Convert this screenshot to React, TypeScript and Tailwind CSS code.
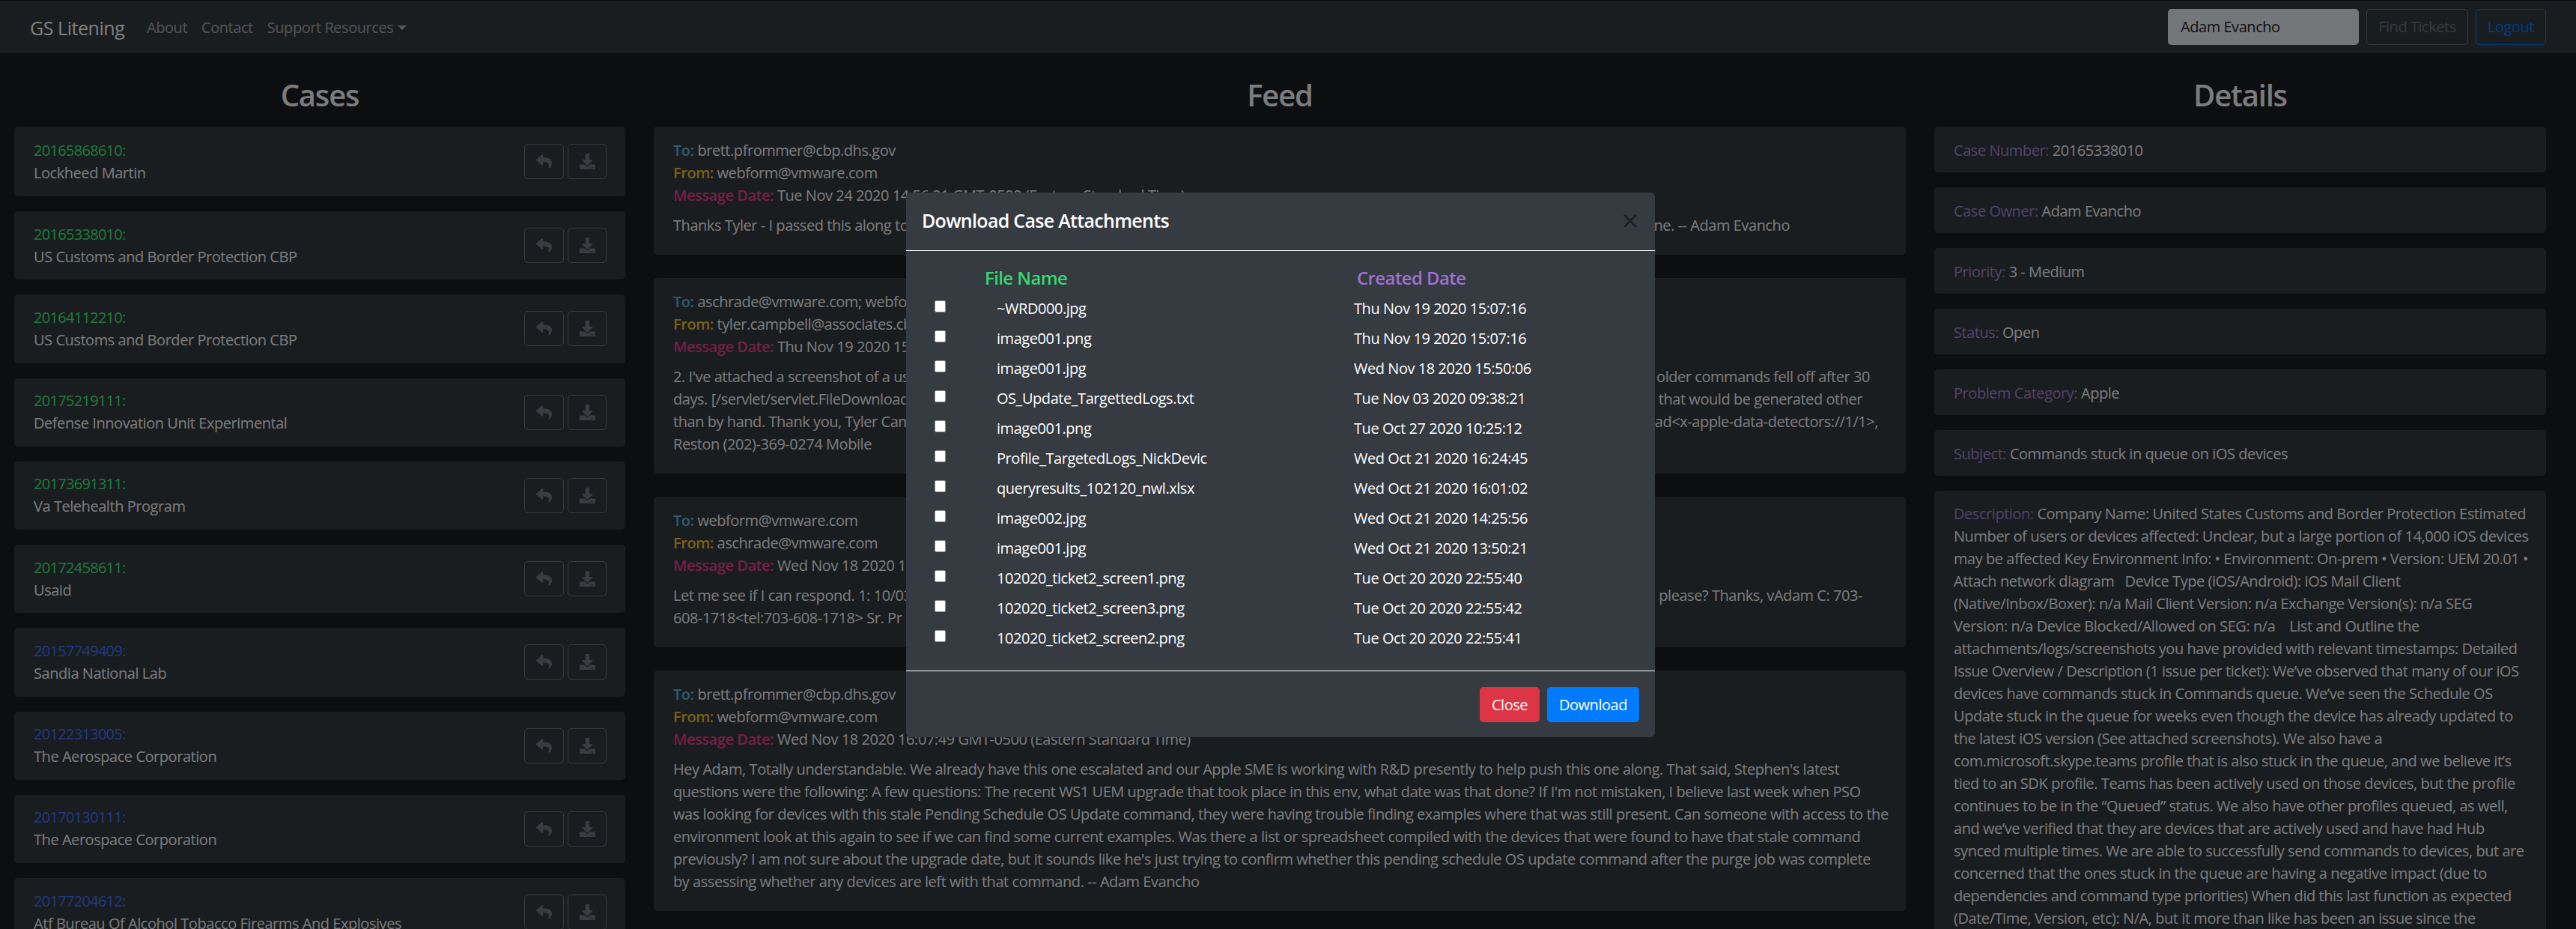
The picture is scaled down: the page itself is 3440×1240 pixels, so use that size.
import React from "react";
import { FaReply, FaDownload } from "react-icons/fa";

const cases = [
  { id: "20165868610:", name: "Lockheed Martin", c: "text-[#3ef077]", h: "h-[93px]" },
  { id: "20165338010:", name: "US Customs and Border Protection CBP", c: "text-[#3ef077]", h: "h-[91.25px]" },
  { id: "20164112210:", name: "US Customs and Border Protection CBP", c: "text-[#3ef077]", h: "h-[91.25px]" },
  { id: "20175219111:", name: "Defense Innovation Unit Experimental", c: "text-[#3ef077]", h: "h-[91.25px]" },
  { id: "20173691311:", name: "Va Telehealth Program", c: "text-[#3ef077]", h: "h-[91.25px]" },
  { id: "20172458611:", name: "Usaid", c: "text-[#3ef077]", h: "h-[91.25px]" },
  { id: "20157749409:", name: "Sandia National Lab", c: "text-[#3f74ff]", h: "h-[91.25px]" },
  { id: "20122313005:", name: "The Aerospace Corporation", c: "text-[#3f74ff]", h: "h-[91.25px]" },
  { id: "20170130111:", name: "The Aerospace Corporation", c: "text-[#3f74ff]", h: "h-[91.25px]" },
  { id: "20177204612:", name: "Atf Bureau Of Alcohol Tobacco Firearms And Explosives", c: "text-[#3f74ff]", h: "h-[91.25px]" },
];

const feed = [
  {
    to: "brett.pfrommer@cbp.dhs.gov",
    from: "webform@vmware.com",
    date: "Tue Nov 24 2020 14:56:21 GMT-0500 (Eastern Standard Time)",
    body: [{ l: "Thanks Tyler - I passed this along to", r: "ne. -- Adam Evancho", pr: "pr-[129px]" }],
  },
  {
    to: "aschrade@vmware.com; webform@vmware.com",
    from: "tyler.campbell@associates.cbp.dhs.gov",
    date: "Thu Nov 19 2020 15:07:16 GMT-0500 (Eastern Standard Time)",
    body: [
      { l: "2. I've attached a screenshot of a us", r: "older commands fell off after 30", pr: "pr-[22px]" },
      { l: "days. [/servlet/servlet.FileDownload", r: "that would be generated other", pr: "pr-[32px]" },
      { l: "than by hand. Thank you, Tyler Cam", r: "ad<x-apple-data-detectors://1/1>,", pr: "pr-[11px]" },
      { l: "Reston (202)-369-0274 Mobile", r: "", pr: "" },
    ],
  },
  {
    to: "webform@vmware.com",
    from: "aschrade@vmware.com",
    date: "Wed Nov 18 2020 16:42:10 GMT-0500 (Eastern Standard Time)",
    body: [
      { l: "Let me see if I can respond. 1: 10/03", r: "please? Thanks, vAdam C: 703-", pr: "pr-[32px]" },
      { l: "608-1718<tel:703-608-1718> Sr. Pr", r: "", pr: "" },
    ],
  },
  {
    to: "brett.pfrommer@cbp.dhs.gov",
    from: "webform@vmware.com",
    date: "Wed Nov 18 2020 16:07:49 GMT-0500 (Eastern Standard Time)",
    body: [
      { l: "Hey Adam, Totally understandable. We already have this one escalated and our Apple SME is working with R&D presently to help push this one along. That said, Stephen's latest", r: "", pr: "" },
      { l: "questions were the following: A few questions: The recent WS1 UEM upgrade that took place in this env, what date was that done? If I'm not mistaken, I believe last week when PSO", r: "", pr: "" },
      { l: "was looking for devices with this stale Pending Schedule OS Update command, they were having trouble finding examples where that was still present. Can someone with access to the", r: "", pr: "" },
      { l: "environment look at this again to see if we can find some current examples. Was there a list or spreadsheet compiled with the devices that were found to have that stale command", r: "", pr: "" },
      { l: "previously? I am not sure about the upgrade date, but it sounds like he's just trying to confirm whether this pending schedule OS update command after the purge job was complete", r: "", pr: "" },
      { l: "by assessing whether any devices are left with that command. -- Adam Evancho", r: "", pr: "" },
    ],
  },
];

const details = [
  ["Case Number:", "20165338010"],
  ["Case Owner:", "Adam Evancho"],
  ["Priority:", "3 - Medium"],
  ["Status:", "Open"],
  ["Problem Category:", "Apple"],
  ["Subject:", "Commands stuck in queue on iOS devices"],
];

const description = [
  "Company Name: United States Customs and Border Protection Estimated",
  "Number of users or devices affected: Unclear, but a large portion of 14,000 iOS devices",
  "may be affected Key Environment Info: • Environment: On-prem • Version: UEM 20.01 •",
  "Attach network diagram \u00a0 Device Type (iOS/Android): iOS Mail Client",
  "(Native/Inbox/Boxer): n/a Mail Client Version: n/a Exchange Version(s): n/a SEG",
  "Version: n/a Device Blocked/Allowed on SEG: n/a \u00a0\u00a0 List and Outline the",
  "attachments/logs/screenshots you have provided with relevant timestamps: Detailed",
  "Issue Overview / Description (1 issue per ticket): We’ve observed that many of our iOS",
  "devices have commands stuck in Commands queue. We’ve seen the Schedule OS",
  "Update stuck in the queue for weeks even though the device has already updated to",
  "the latest iOS version (See attached screenshots). We also have a",
  "com.microsoft.skype.teams profile that is also stuck in the queue, and we believe it’s",
  "tied to an SDK profile. Teams has been actively used on those devices, but the profile",
  "continues to be in the “Queued” status. We also have other profiles queued, as well,",
  "and we’ve verified that they are devices that are actively used and have had Hub",
  "synced multiple times. We are able to successfully send commands to devices, but are",
  "concerned that the ones stuck in the queue are having a negative impact (due to",
  "dependencies and command type priorities) When did this last function as expected",
  "(Date/Time, Version, etc): N/A, but it more than like has been an issue since the",
];

const files = [
  ["~WRD000.jpg", "Thu Nov 19 2020 15:07:16"],
  ["image001.png", "Thu Nov 19 2020 15:07:16"],
  ["image001.jpg", "Wed Nov 18 2020 15:50:06"],
  ["OS_Update_TargettedLogs.txt", "Tue Nov 03 2020 09:38:21"],
  ["image001.png", "Tue Oct 27 2020 10:25:12"],
  ["Profile_TargetedLogs_NickDevic", "Wed Oct 21 2020 16:24:45"],
  ["queryresults_102120_nwl.xlsx", "Wed Oct 21 2020 16:01:02"],
  ["image002.jpg", "Wed Oct 21 2020 14:25:56"],
  ["image001.jpg", "Wed Oct 21 2020 13:50:21"],
  ["102020_ticket2_screen1.png", "Tue Oct 20 2020 22:55:40"],
  ["102020_ticket2_screen3.png", "Tue Oct 20 2020 22:55:42"],
  ["102020_ticket2_screen2.png", "Tue Oct 20 2020 22:55:41"],
];

function IconButton({ children, w }: { children: React.ReactNode; w: string }) {
  return (
    <button className={`${w} h-[47px] flex items-center justify-center rounded-[5px] border border-[#6c757d] text-[#737a84]`}>
      {children}
    </button>
  );
}

export default function App() {
  return (
    <div className="relative h-[1240px] w-[3440px] overflow-hidden bg-[#1a1d20] font-['Open_Sans',sans-serif] text-[20px] leading-[30px] tracking-[-0.45px] text-white">
      <nav className="h-[71px] border-t border-[#14171a] bg-[#343a40] flex items-center pl-[40px] pr-[40px]">
        <span className="text-[25px] text-white w-[156px] whitespace-nowrap mt-[2px]">GS Litening</span>
        <div className="flex items-center gap-[19px] text-[#a8abae] mt-[1px]">
          <span>About</span>
          <span>Contact</span>
          <span className="flex items-center gap-[6px]">
            Support Resources
            <span className="w-0 h-0 border-x-[6px] border-x-transparent border-t-[6px] border-t-[#a8abae]" />
          </span>
        </div>
        <div className="ml-auto flex items-center gap-[10px]">
          <div className="w-[255px] h-[48px] rounded-[5px] bg-[#e9eef4] text-[#222] pl-[17px] flex items-center">Adam Evancho</div>
          <button className="w-[136px] h-[48px] rounded-[5px] border border-[#6c757d] text-[#6c757d]">Find Tickets</button>
          <button className="w-[94px] h-[48px] rounded-[5px] border border-[#007bff] text-[#007bff]">Logout</button>
        </div>
      </nav>

      <main className="flex gap-[38px] pl-[19px] pr-[39px] pt-[32px]">
        <section className="w-[816px] shrink-0">
          <h2 className="text-center text-[40px] leading-[48px] font-semibold tracking-[-1.2px] text-[#f8f9fa] mb-[18px]">Cases</h2>
          <div className="flex flex-col gap-[20px]">
            {cases.map((c) => (
              <div key={c.id} className={`${c.h} rounded-[5px] bg-[#343a40] flex items-center justify-between pl-[26px] pr-[25px]`}>
                <div className="text-[#f8f9fa] whitespace-nowrap">
                  <div className={`${c.c} tracking-[-0.7px]`}>{c.id}</div>
                  <div>{c.name}</div>
                </div>
                <div className="flex gap-[5px]">
                  <IconButton w="w-[53px]"><FaReply size={21} /></IconButton>
                  <IconButton w="w-[52px]"><FaDownload size={21} /></IconButton>
                </div>
              </div>
            ))}
          </div>
        </section>

        <section className="w-[1672px] shrink-0">
          <h2 className="text-center text-[40px] leading-[48px] font-semibold tracking-[-1.2px] text-[#f8f9fa] mb-[18px]">Feed</h2>
          <div className="flex flex-col gap-[31px]">
            {feed.map((f, i) => (
              <div key={i} className="rounded-[5px] bg-[#343a40] pt-[17px] pb-[24px] px-[26px] text-[#f8f9fa]">
                <div className="whitespace-nowrap"><span className="font-semibold text-[#5fb7e0]">To:</span> {f.to}</div>
                <div className="whitespace-nowrap"><span className="font-semibold text-[#f0c030]">From:</span> {f.from}</div>
                <div className="whitespace-nowrap"><span className="font-semibold text-[#e83e8c]">Message Date:</span> {f.date}</div>
                <div className="mt-[10px]">
                  {f.body.map((b, j) => (
                    <div key={j} className={`flex justify-between whitespace-nowrap ${b.pr}`}>
                      <span>{b.l}</span>
                      {b.r && <span>{b.r}</span>}
                    </div>
                  ))}
                </div>
              </div>
            ))}
          </div>
        </section>

        <section className="w-[817px] shrink-0">
          <h2 className="text-center text-[40px] leading-[48px] font-semibold tracking-[-1.2px] text-[#f8f9fa] mb-[18px]">Details</h2>
          <div className="flex flex-col gap-[20px]">
            {details.map(([k, v]) => (
              <div key={k} className="h-[61px] rounded-[5px] bg-[#343a40] pt-[17px] px-[26px] text-[#f8f9fa] whitespace-nowrap">
                <span className="text-[#a585d6]">{k}</span> {v}
              </div>
            ))}
            <div className="rounded-[5px] bg-[#343a40] pt-[16px] pb-[24px] px-[26px] text-[#f8f9fa]">
              {description.map((l, i) => (
                <div key={i} className="whitespace-nowrap">
                  {i === 0 && <span className="text-[#a585d6]">Description: </span>}
                  {l}
                </div>
              ))}
            </div>
          </div>
        </section>
      </main>

      <div className="absolute inset-0 bg-black/50" />

      <div className="absolute left-[1210px] top-[257px] w-[1000px] h-[727px] rounded-[6px] bg-[#363a41] text-white flex flex-col">
        <div className="h-[78px] shrink-0 border-b border-white flex items-center justify-between pl-[21px] pr-[22px]">
          <h5 className="text-[25px] leading-[36px] font-semibold tracking-[-0.7px] -mt-[4px]">Download Case Attachments</h5>
          <span className="text-[40px] leading-none font-normal text-[#1d2024] -mt-[4px]">×</span>
        </div>
        <div className="flex-1 pt-[16px]">
          <div className="grid grid-cols-[105px_497px_1fr] h-[41px] text-[24px] leading-[40px] font-semibold tracking-[-0.6px]">
            <span />
            <span className="text-[#33d96e]">File Name</span>
            <span className="text-[#a070d0]">Created Date</span>
          </div>
          {files.map(([n, d], i) => (
            <div key={i} className="grid grid-cols-[121px_477px_1fr] h-[40px] items-center whitespace-nowrap">
              <span className="pl-[38px] flex"><input type="checkbox" readOnly className="w-[15px] h-[16px] -mt-[6px] appearance-none bg-white border border-[#8f8f8f] rounded-[2px]" /></span>
              <span>{n}</span>
              <span>{d}</span>
            </div>
          ))}
        </div>
        <div className="h-[89px] shrink-0 border-t border-white flex justify-end gap-[10px] pt-[21px] pr-[21px]">
          <button className="w-[80px] h-[47px] rounded-[5px] bg-[#dc3545]">Close</button>
          <button className="w-[123px] h-[47px] rounded-[5px] bg-[#007bff]">Download</button>
        </div>
      </div>
    </div>
  );
}
